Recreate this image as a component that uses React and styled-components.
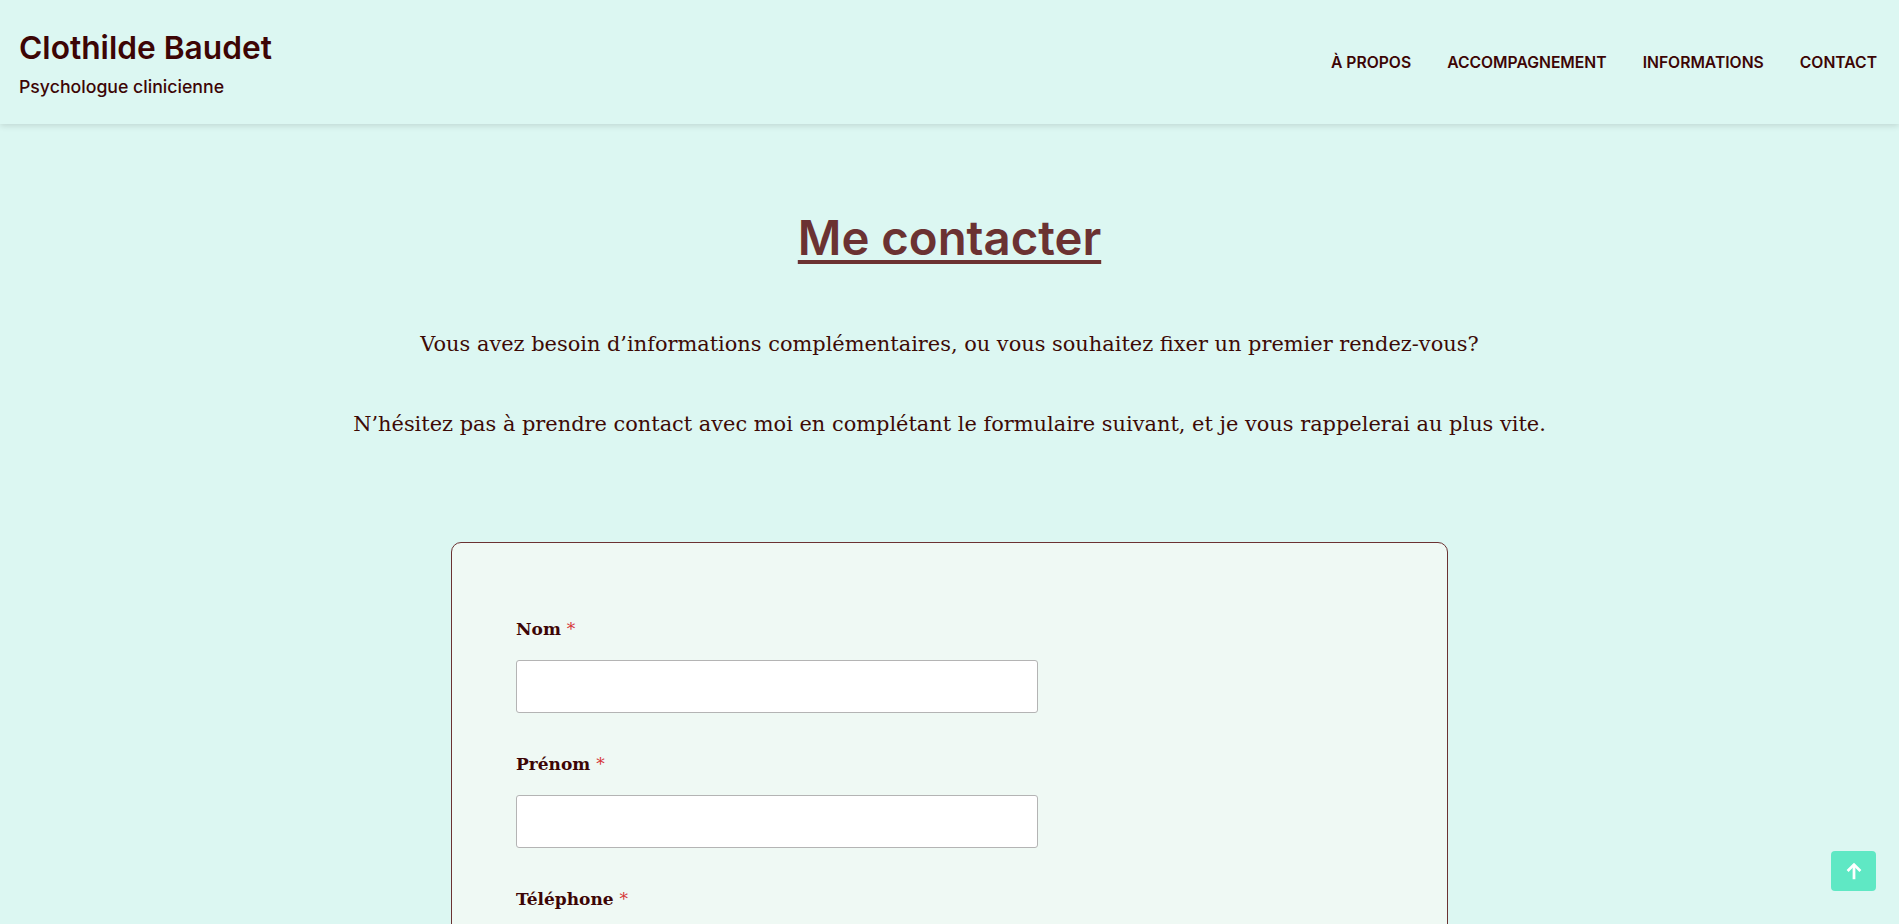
import React from "react";
import styled, { createGlobalStyle } from "styled-components";

const Global = createGlobalStyle`
  html, body { margin: 0; padding: 0; }
  body {
    background: #dcf7f2;
    color: #3d0a05;
    font-family: "DejaVu Serif", "Liberation Serif", serif;
    overflow: hidden;
  }
  * { box-sizing: border-box; }
`;

const Page = styled.div`
  min-height: 924px;
  background: #dcf7f2;
`;

const Header = styled.header`
  height: 124px;
  display: flex;
  align-items: center;
  justify-content: space-between;
  padding: 0 22px 0 19px;
  box-shadow: 0 2px 6px rgba(0, 0, 0, 0.12);
  background: #dcf7f2;
  position: relative;
`;

const Brand = styled.div`
  display: flex;
  flex-direction: column;
  gap: 12px;
  margin-top: 4px;
`;

const SiteTitle = styled.div`
  font-family: Inter, "Open Sans", sans-serif;
  font-weight: 600;
  font-size: 31.7px;
  line-height: 34px;
  color: #3d0505;
`;

const Tagline = styled.div`
  font-family: Inter, "Open Sans", sans-serif;
  font-weight: 500;
  font-size: 17.7px;
  line-height: 20px;
  color: #3d0505;
`;

const Nav = styled.nav`
  display: flex;
  gap: 36px;
`;

const NavLink = styled.a`
  font-family: Inter, "Open Sans", sans-serif;
  font-weight: 600;
  font-size: 15.7px;
  color: #3d0505;
  text-transform: uppercase;
  text-decoration: none;
`;

const Main = styled.main`
  display: flex;
  flex-direction: column;
  align-items: center;
`;

const Heading = styled.h1`
  margin: 84px 0 0;
  font-family: Inter, "Open Sans", sans-serif;
  font-weight: 600;
  font-size: 47.3px;
  line-height: 60px;
  color: #6b3232;
  text-decoration: underline;
  text-decoration-thickness: 4px;
  text-underline-offset: 5px;
`;

const Intro = styled.div`
  display: flex;
  flex-direction: column;
  align-items: center;
  gap: 50px;
  margin-top: 61px;
`;

const Para = styled.p`
  margin: 0;
  font-size: 20.9px;
  line-height: 30px;
  color: #3d0a05;
  text-align: center;
`;

const Card = styled.form`
  margin-top: 103px;
  width: 997px;
  height: 500px;
  border: 1px solid #6b3232;
  border-radius: 10px;
  background: #eff9f4;
  padding: 73px 64px;
  display: flex;
  flex-direction: column;
  gap: 38px;
`;

const Field = styled.div`
  display: flex;
  flex-direction: column;
  gap: 18px;
`;

const Label = styled.label`
  font-weight: 700;
  font-size: 17px;
  line-height: 26px;
  color: #3d0505;
`;

const Req = styled.span`
  color: #d63638;
  font-weight: 400;
`;

const Input = styled.input`
  width: 522px;
  height: 53px;
  border: 1px solid #b4b4b4;
  border-radius: 3px;
  background: #fff;
`;

const TopButton = styled.button`
  position: fixed;
  right: 23px;
  bottom: 33px;
  width: 45px;
  height: 40px;
  border: none;
  border-radius: 4px;
  background: #5fe8c4;
  display: flex;
  align-items: center;
  justify-content: center;
  padding: 0;
`;

const fields = ["Nom", "Prénom", "Téléphone"];

export default function App() {
  return (
    <Page>
      <Global />
      <Header>
        <Brand>
          <SiteTitle>Clothilde Baudet</SiteTitle>
          <Tagline>Psychologue clinicienne</Tagline>
        </Brand>
        <Nav>
          <NavLink href="#">À propos</NavLink>
          <NavLink href="#">Accompagnement</NavLink>
          <NavLink href="#">Informations</NavLink>
          <NavLink href="#">Contact</NavLink>
        </Nav>
      </Header>
      <Main>
        <Heading>Me contacter</Heading>
        <Intro>
          <Para>Vous avez besoin d’informations complémentaires, ou vous souhaitez fixer un premier rendez-vous?</Para>
          <Para>N’hésitez pas à prendre contact avec moi en complétant le formulaire suivant, et je vous rappelerai au plus vite.</Para>
        </Intro>
        <Card>
          {fields.map((f) => (
            <Field key={f}>
              <Label>{f} <Req>*</Req></Label>
              <Input type="text" />
            </Field>
          ))}
        </Card>
      </Main>
      <TopButton aria-label="Haut de page">
        <svg width="22" height="22" viewBox="0 0 24 24" fill="none" stroke="#fff" strokeWidth="3" strokeLinecap="butt" strokeLinejoin="miter">
          <path d="M12 21V5" />
          <path d="M5 12l7-7 7 7" />
        </svg>
      </TopButton>
    </Page>
  );
}
